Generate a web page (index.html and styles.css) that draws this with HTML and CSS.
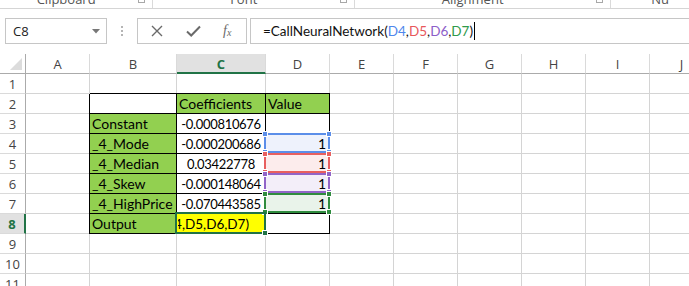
FILE: index.html
```html
<!DOCTYPE html>
<html lang="en">
  <head>
    <meta charset="UTF-8" />
    <title>CallNeuralNetwork</title>
    <link rel="stylesheet" href="styles.css">
  </head>
  <body>
    <!-- ribbon group labels (cut off at the top) -->
    <div class="ribbon">
      <div class="group g-clip"><span class="glabel">Clipboard</span><i class="launcher"></i></div>
      <div class="group g-font"><span class="glabel">Font</span><i class="launcher"></i></div>
      <div class="group g-align"><span class="glabel">Alignment</span><i class="launcher"></i></div>
      <div class="group g-num"><span class="glabel">Nu</span></div>
    </div>

    <!-- name box + formula bar -->
    <div class="fbar">
      <div class="namebox">
        <span>C8</span>
        <svg class="drop" width="8" height="5" viewBox="0 0 8 5"><path d="M0 0H8L4 4.5Z" fill="#777"/></svg>
      </div>
      <div class="grip"><i></i><i></i><i></i></div>
      <div class="fbuttons">
        <svg width="12" height="12" viewBox="0 0 12 12"><path d="M1 1L11 11M11 1L1 11" stroke="#6a6a6a" stroke-width="1.4"/></svg>
        <svg width="15" height="12" viewBox="0 0 15 12"><path d="M1 6.5L5.2 10.5L14 1.5" stroke="#6a6a6a" stroke-width="2" fill="none"/></svg>
        <span class="fx">f<sub>x</sub></span>
      </div>
      <div class="finput">=CallNeuralNetwork(<span class="r-blue">D4</span>,<span class="r-red">D5</span>,<span class="r-purple">D6</span>,<span class="r-green">D7</span>)<i class="caret"></i></div>
    </div>

    <!-- the sheet -->
    <div class="sheet">
      <div class="c corner"><svg width="12" height="12" viewBox="0 0 12 12"><path d="M12 0V12H0Z" fill="#dcdcdc"/></svg></div>
      <div class="c ch">A</div>
      <div class="c ch">B</div>
      <div class="c ch sel">C</div>
      <div class="c ch">D</div>
      <div class="c ch">E</div>
      <div class="c ch">F</div>
      <div class="c ch">G</div>
      <div class="c ch">H</div>
      <div class="c ch">I</div>
      <div class="c ch">J</div>

      <!-- row 1 -->
      <div class="c rh">1</div>
      <div class="c"></div><div class="c"></div><div class="c"></div><div class="c"></div>
      <div class="c"></div><div class="c"></div><div class="c"></div><div class="c"></div><div class="c"></div><div class="c"></div>

      <!-- row 2 -->
      <div class="c rh">2</div>
      <div class="c"></div>
      <div class="c t"></div>
      <div class="c t g">Coefficients</div>
      <div class="c t g">Value</div>
      <div class="c"></div><div class="c"></div><div class="c"></div><div class="c"></div><div class="c"></div><div class="c"></div>

      <!-- row 3 -->
      <div class="c rh">3</div>
      <div class="c"></div>
      <div class="c t g">Constant</div>
      <div class="c t num">-0.000810676</div>
      <div class="c t"></div>
      <div class="c"></div><div class="c"></div><div class="c"></div><div class="c"></div><div class="c"></div><div class="c"></div>

      <!-- row 4 -->
      <div class="c rh">4</div>
      <div class="c"></div>
      <div class="c t g">_4_Mode</div>
      <div class="c t num">-0.000200686</div>
      <div class="c t val blue">1<span class="box"><i class="tl"></i><i class="tr"></i><i class="bl"></i><i class="br"></i></span></div>
      <div class="c"></div><div class="c"></div><div class="c"></div><div class="c"></div><div class="c"></div><div class="c"></div>

      <!-- row 5 -->
      <div class="c rh">5</div>
      <div class="c"></div>
      <div class="c t g">_4_Median</div>
      <div class="c t num">0.03422778</div>
      <div class="c t val red">1<span class="box"><i class="tl"></i><i class="tr"></i><i class="bl"></i><i class="br"></i></span></div>
      <div class="c"></div><div class="c"></div><div class="c"></div><div class="c"></div><div class="c"></div><div class="c"></div>

      <!-- row 6 -->
      <div class="c rh">6</div>
      <div class="c"></div>
      <div class="c t g">_4_Skew</div>
      <div class="c t num">-0.000148064</div>
      <div class="c t val purple">1<span class="box"><i class="tl"></i><i class="tr"></i><i class="bl"></i><i class="br"></i></span></div>
      <div class="c"></div><div class="c"></div><div class="c"></div><div class="c"></div><div class="c"></div><div class="c"></div>

      <!-- row 7 -->
      <div class="c rh">7</div>
      <div class="c"></div>
      <div class="c t g">_4_HighPrice</div>
      <div class="c t num">-0.070443585</div>
      <div class="c t val green">1<span class="box"><i class="tl"></i><i class="tr"></i><i class="bl"></i><i class="br"></i></span></div>
      <div class="c"></div><div class="c"></div><div class="c"></div><div class="c"></div><div class="c"></div><div class="c"></div>

      <!-- row 8 -->
      <div class="c rh sel">8</div>
      <div class="c"></div>
      <div class="c t g">Output</div>
      <div class="c t edit"><div class="clip"><span>D4,D5,D6,D7)</span></div><span class="selbox"><i></i></span></div>
      <div class="c t"></div>
      <div class="c"></div><div class="c"></div><div class="c"></div><div class="c"></div><div class="c"></div><div class="c"></div>

      <!-- row 9 -->
      <div class="c rh">9</div>
      <div class="c"></div><div class="c"></div><div class="c"></div><div class="c"></div>
      <div class="c"></div><div class="c"></div><div class="c"></div><div class="c"></div><div class="c"></div><div class="c"></div>

      <!-- row 10 -->
      <div class="c rh">10</div>
      <div class="c"></div><div class="c"></div><div class="c"></div><div class="c"></div>
      <div class="c"></div><div class="c"></div><div class="c"></div><div class="c"></div><div class="c"></div><div class="c"></div>

      <!-- row 11 -->
      <div class="c rh">11</div>
      <div class="c"></div><div class="c"></div><div class="c"></div><div class="c"></div>
      <div class="c"></div><div class="c"></div><div class="c"></div><div class="c"></div><div class="c"></div><div class="c"></div>
    </div>
  </body>
</html>
```

FILE: styles.css
```css
* {
    box-sizing: border-box;
    margin: 0;
    padding: 0;
}
body {
    width: 689px;
    height: 286px;
    overflow: hidden;
    background: #fff;
    font-family: Lato, "Liberation Sans", sans-serif;
    color: #000;
}

/* ribbon labels */
.ribbon {
    display: flex;
    height: 9px;
    border-bottom: 1px solid #d5d5d5;
    overflow: hidden;
}
.group {
    display: flex;
    position: relative;
    height: 9px;
    border-right: 1px solid #dadada;
    font-family: "Open Sans", sans-serif;
    font-size: 13px;
    color: #555;
}
.g-clip { width: 158px; }
.g-font { width: 208px; }
.g-align { width: 264px; }
.g-num { flex: 1; border-right: none; }
.glabel {
    display: block;
    width: 100%;
    text-align: center;
    line-height: 14px;
    margin-top: -8px;
    padding-right: 20px;
}
.g-num .glabel {
    text-align: left;
    padding-left: 40px;
}
.launcher {
    position: absolute;
    right: 7px;
    top: -4px;
    width: 7px;
    height: 7px;
    border: 1px solid #a8a8a8;
}

/* formula bar */
.fbar {
    display: flex;
    align-items: stretch;
    height: 26px;
    margin-top: 9px;
}
.namebox {
    width: 102px;
    margin-left: 5px;
    border: 1px solid #c6c6c6;
    display: flex;
    align-items: center;
    justify-content: space-between;
    padding: 0 6px 0 7px;
    font-family: "Open Sans", sans-serif;
    font-size: 13px;
    color: #222;
}
.drop { margin-top: 1px; }
.grip {
    width: 30px;
    display: flex;
    flex-direction: column;
    align-items: center;
    justify-content: center;
    gap: 2px;
}
.grip i {
    width: 2px;
    height: 2px;
    background: #b5b5b5;
}
.fbuttons {
    width: 110px;
    border: 1px solid #c6c6c6;
    display: flex;
    align-items: center;
    padding-left: 13px;
    gap: 23px;
}
.fx {
    font-family: "Liberation Serif", serif;
    font-style: italic;
    font-size: 14px;
    color: #6a6a6a;
    margin-left: -1px;
}
.fx sub {
    font-size: 10px;
    vertical-align: 0;
    position: relative;
    top: 1px;
}
.finput {
    flex: 1;
    margin-left: 3px;
    margin-right: -20px;
    border: 1px solid #c6c6c6;
    display: flex;
    align-items: center;
    padding-left: 12px;
    font-size: 13.5px;
    white-space: pre;
    color: #111;
}
.r-blue { color: #4f87ec; }
.r-red { color: #e8575b; }
.r-purple { color: #8d5ec9; }
.r-green { color: #2e9a4a; }
.caret {
    display: inline-block;
    width: 1px;
    height: 18px;
    background: #000;
    margin-left: 1px;
}

/* sheet grid */
.sheet {
    display: grid;
    grid-template-columns: 26px 64px 87px 89px 64px 64px 64px 64px 64px 64px 64px;
    grid-auto-rows: 20px;
    margin-top: 10px;
}
.c {
    position: relative;
    border-right: 1px solid #d4d4d4;
    border-bottom: 1px solid #d4d4d4;
    font-size: 14px;
    line-height: 16px;
    padding: 2px 2px 0;
    white-space: nowrap;
}
.corner {
    display: flex;
    align-items: flex-end;
    justify-content: flex-end;
    padding: 0 3px 3px 0;
    border-right-color: #ababab;
    border-bottom-color: #ababab;
}
.ch {
    text-align: center;
    font-family: "Open Sans", sans-serif;
    font-size: 13px;
    line-height: 17px;
    color: #444;
    border-bottom-color: #ababab;
    border-right-color: #dadada;
}
.rh {
    text-align: center;
    font-family: "Open Sans", sans-serif;
    font-size: 13px;
    line-height: 20px;
    padding: 0;
    color: #444;
    border-right-color: #ababab;
    border-bottom-color: #dadada;
}
.ch.sel {
    background: #e1e1e1;
    border-bottom: 2px solid #217346;
    color: #217346;
    font-weight: bold;
}
.rh.sel {
    background: #e1e1e1;
    border-right: 2px solid #217346;
    color: #217346;
    font-weight: bold;
}

/* the bordered table */
.t {
    border-color: #000;
    box-shadow: -1px 0 0 #000, 0 -1px 0 #000;
}
.g { background: #92d050; }
.num {
    text-align: center;
    font-size: 13px;
    letter-spacing: -0.3px;
    padding: 2px 0 0;
}
.val {
    text-align: right;
    padding-right: 3px;
}

/* formula reference boxes */
.box {
    position: absolute;
    top: -1px;
    left: -2px;
    right: -1px;
    bottom: 0;
    border: 2px solid;
    z-index: 2;
}
.box i {
    position: absolute;
    width: 6px;
    height: 6px;
    background: currentColor;
    border: 1px solid #fff;
}
.box .tl { left: -4px; top: -4px; }
.box .tr { right: -4px; top: -4px; }
.box .bl { left: -4px; bottom: -4px; }
.box .br { right: -4px; bottom: -4px; }
.blue { background: #eef2fc; }
.blue .box { color: #5b8ee9; border-color: #5b8ee9; }
.red { background: #fcecec; }
.red .box { color: #e85f5f; border-color: #e85f5f; }
.purple { background: #f3eef9; }
.purple .box { color: #9164c8; border-color: #9164c8; }
.green { background: #e9f3ea; }
.green .box { color: #2f8c3e; border-color: #2f8c3e; }

/* cell being edited: only the tail of the formula shows */
.edit {
    background: #ffff00;
    padding: 2px 0 0 1px;
    font-size: 13.5px;
}
.clip {
    width: 71px;
    display: flex;
    justify-content: flex-end;
    overflow: hidden;
}
.clip span {
    flex-shrink: 0;
}
.selbox {
    position: absolute;
    top: -2px;
    left: -2px;
    right: -1px;
    bottom: -1px;
    border: 2px solid #217346;
    z-index: 3;
}
.selbox i {
    position: absolute;
    right: -4px;
    bottom: -4px;
    width: 6px;
    height: 6px;
    background: #217346;
    border: 1px solid #fff;
}
```
